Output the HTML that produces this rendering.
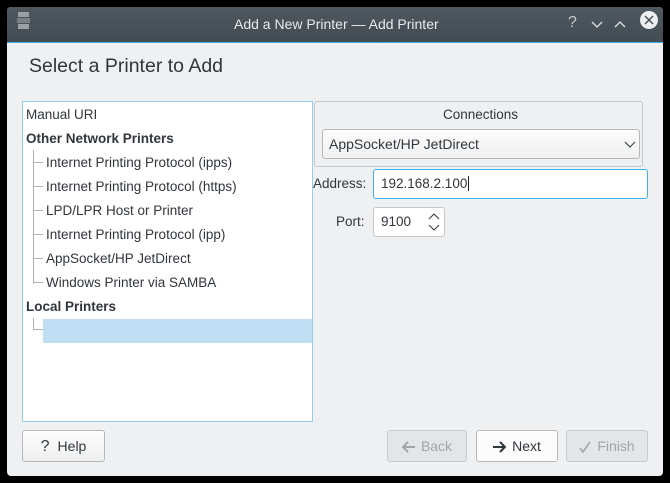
<!DOCTYPE html>
<html><head><meta charset="utf-8"><style>
*{margin:0;padding:0;box-sizing:border-box}
body{width:670px;height:483px;background:#000;font-family:"Liberation Sans","DejaVu Sans",sans-serif;font-size:13.5px;color:#31363b;position:relative;overflow:hidden}
.win{position:absolute;left:7px;top:7px;width:656px;height:469px;background:#eff0f1;border-radius:4px;overflow:hidden}
.tb{position:absolute;left:0;top:0;width:656px;height:36px;background:linear-gradient(#4f585f,#444c53);border-bottom:1px solid #3daee9;color:#e8eaeb;font-size:14px}
.a{position:absolute;white-space:nowrap}
.tree{position:absolute;left:15px;top:94px;width:291px;height:321px;background:#fff;border:1px solid #93cee9}
.btn{position:absolute;height:32px;border:1px solid #b6b8ba;border-radius:3px;background:linear-gradient(#fcfcfc,#eff0f1);text-align:center;line-height:30px;font-size:14px}
.btn svg{vertical-align:-2px;margin-right:6px}
.dis{color:#a2a5a8;background:#e3e5e7;border-color:#c9cbcd}
.ln{position:absolute;border-color:#b0b3b5;border-style:solid;border-width:0}
</style></head><body>
<div class="win">
<div class="tb">
<svg class="a" style="left:10px;top:5px" width="14" height="18"><rect x="1" y="0" width="11" height="5" fill="#9aa0a4"/><rect x="0" y="6" width="13" height="5" fill="#7b8185"/><rect x="1" y="12" width="11" height="5" fill="#9aa0a4"/></svg>
<div class="a" style="left:227px;top:9px">Add a New Printer — Add Printer</div>
<div class="a" style="left:561px;top:7px;font-size:16px;color:#c9cccf">?</div>
<svg class="a" style="left:584px;top:8px" width="40" height="20" fill="none" stroke="#dfe2e4" stroke-width="1.3"><path d="M1 7l5 5 5-5M24 12l5-5 5 5"/></svg>
<svg class="a" style="left:632px;top:3px" width="20" height="20"><circle cx="10" cy="10" r="9" fill="#eceeef"/><path d="M6 6l8 8M14 6l-8 8" stroke="#475057" stroke-width="1.5"/></svg>
</div>
<div class="a" style="left:22px;top:48px;font-size:19.5px">Select a Printer to Add</div>
<div class="tree">
<div class="a" style="left:3px;top:5px">Manual URI</div>
<div class="a" style="left:3px;top:29px;font-weight:bold">Other Network Printers</div>
<div class="ln" style="left:10px;top:48px;height:134px;border-left-width:1px"></div>
<div class="ln" style="left:10px;top:60px;width:10px;border-top-width:1px"></div>
<div class="ln" style="left:10px;top:84px;width:10px;border-top-width:1px"></div>
<div class="ln" style="left:10px;top:108px;width:10px;border-top-width:1px"></div>
<div class="ln" style="left:10px;top:132px;width:10px;border-top-width:1px"></div>
<div class="ln" style="left:10px;top:156px;width:10px;border-top-width:1px"></div>
<div class="ln" style="left:10px;top:180px;width:10px;border-top-width:1px"></div>
<div class="a" style="left:23px;top:53px">Internet Printing Protocol (ipps)</div>
<div class="a" style="left:23px;top:77px">Internet Printing Protocol (https)</div>
<div class="a" style="left:23px;top:101px">LPD/LPR Host or Printer</div>
<div class="a" style="left:23px;top:125px">Internet Printing Protocol (ipp)</div>
<div class="a" style="left:23px;top:149px">AppSocket/HP JetDirect</div>
<div class="a" style="left:23px;top:173px">Windows Printer via SAMBA</div>
<div class="a" style="left:3px;top:197px;font-weight:bold">Local Printers</div>
<div class="ln" style="left:10px;top:216px;height:12px;border-left-width:1px;width:10px;border-bottom-width:1px"></div>
<div class="a" style="left:20px;top:217px;width:269px;height:24px;background:#c0def3"></div>
</div>
<div class="a" style="left:307px;top:94px;width:329px;height:66px;border:1px solid #c5c7c9;border-radius:3px"></div>
<div class="a" style="left:436px;top:100px">Connections</div>
<div class="btn" style="left:315px;top:122px;width:318px;height:30px;text-align:left;padding-left:6px;line-height:28px">AppSocket/HP JetDirect</div>
<svg class="a" style="left:617px;top:134px" width="12" height="8" fill="none" stroke="#31363b"><path d="M1 1l5 5 5-5"/></svg>
<div class="a" style="left:306px;top:169px">Address:</div>
<div class="a" style="left:366px;top:162px;width:275px;height:30px;background:#fff;border:1px solid #3daee9;border-radius:3px;padding:6px 7px">192.168.2.100<span style="border-left:1px solid #222;margin-left:1px"></span></div>
<div class="a" style="left:329px;top:207px">Port:</div>
<div class="a" style="left:366px;top:200px;width:72px;height:30px;background:#fff;border:1px solid #c5c7c9;border-radius:3px;padding:6px 7px">9100</div>
<svg class="a" style="left:421px;top:206px" width="12" height="18" fill="none" stroke="#31363b"><path d="M1 6l5-5 5 5M1 12l5 5 5-5"/></svg>
<div class="btn" style="left:15px;top:423px;width:83px"><b style="font-weight:normal;font-size:16px;margin-right:8px">?</b>Help</div>
<div class="btn dis" style="left:380px;top:423px;width:80px"><svg width="13" height="12" fill="none" stroke="#a2a5a8" stroke-width="2"><path d="M6 1L1 6l5 5M1 6h12"/></svg>Back</div>
<div class="btn" style="left:469px;top:423px;width:82px;background:#fcfcfc"><svg width="13" height="12" fill="none" stroke="#31363b" stroke-width="2"><path d="M7 1l5 5-5 5M0 6h12"/></svg>Next</div>
<div class="btn dis" style="left:559px;top:423px;width:82px"><svg width="12" height="12" fill="none" stroke="#a2a5a8" stroke-width="1.6"><path d="M1 7l3 4 7-10"/></svg>Finish</div>
</div>
</body></html>
